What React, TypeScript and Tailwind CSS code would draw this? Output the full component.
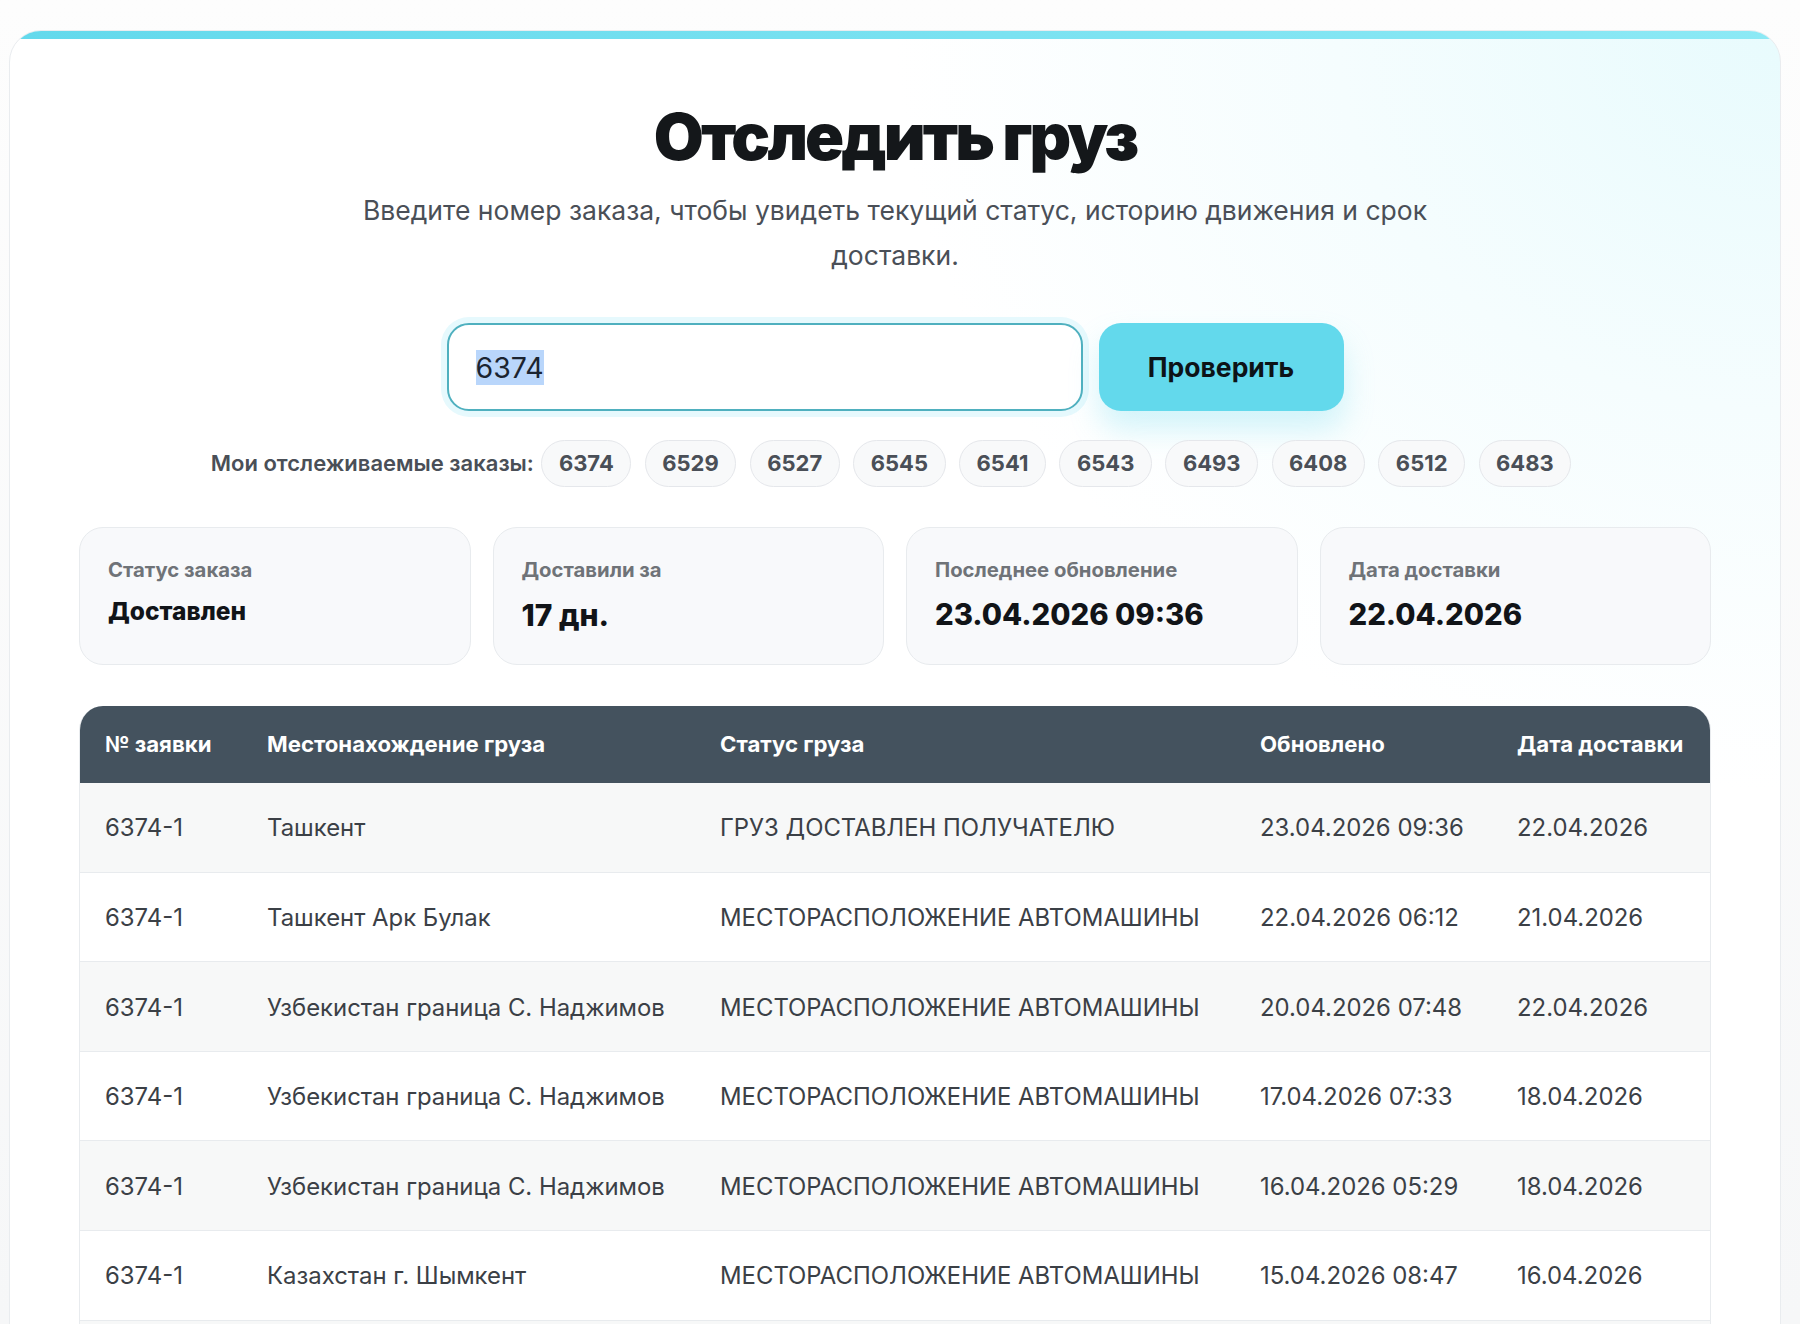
import { useEffect, useRef } from "react";

const chips = ["6374", "6529", "6527", "6545", "6541", "6543", "6493", "6408", "6512", "6483"];

const stats = [
  { label: "Статус заказа", value: "Доставлен", size: "text-[24.5px] leading-[36px]" },
  { label: "Доставили за", value: "17 дн.", size: "text-[30px] leading-[44px]" },
  { label: "Последнее обновление", value: "23.04.2026 09:36", size: "text-[29.3px] leading-[44px]" },
  { label: "Дата доставки", value: "22.04.2026", size: "text-[29.3px] leading-[44px]" },
];

const rows = [
  ["6374-1", "Ташкент", "ГРУЗ ДОСТАВЛЕН ПОЛУЧАТЕЛЮ", "23.04.2026 09:36", "22.04.2026"],
  ["6374-1", "Ташкент Арк Булак", "МЕСТОРАСПОЛОЖЕНИЕ АВТОМАШИНЫ", "22.04.2026 06:12", "21.04.2026"],
  ["6374-1", "Узбекистан граница С. Наджимов", "МЕСТОРАСПОЛОЖЕНИЕ АВТОМАШИНЫ", "20.04.2026 07:48", "22.04.2026"],
  ["6374-1", "Узбекистан граница С. Наджимов", "МЕСТОРАСПОЛОЖЕНИЕ АВТОМАШИНЫ", "17.04.2026 07:33", "18.04.2026"],
  ["6374-1", "Узбекистан граница С. Наджимов", "МЕСТОРАСПОЛОЖЕНИЕ АВТОМАШИНЫ", "16.04.2026 05:29", "18.04.2026"],
  ["6374-1", "Казахстан г. Шымкент", "МЕСТОРАСПОЛОЖЕНИЕ АВТОМАШИНЫ", "15.04.2026 08:47", "16.04.2026"],
];

const heads = ["№ заявки", "Местонахождение груза", "Статус груза", "Обновлено", "Дата доставки"];

export default function App() {
  const inputRef = useRef<HTMLInputElement>(null);
  useEffect(() => {
    inputRef.current?.focus();
    inputRef.current?.select();
  }, []);

  return (
    <div className="h-[1324px] overflow-hidden bg-gradient-to-b from-[#fdfdfd] to-[#f6f7f8] pt-[30px] pl-[9px] font-['Inter','Noto_Sans',sans-serif]">
      <div className="w-[1772px] overflow-hidden rounded-[32px] border border-[#e9ecef] bg-[radial-gradient(ellipse_50%_55%_at_100%_0%,#e8fbfd_0%,#f5fdfe_50%,#ffffff_100%)]">
        <div className="h-[8px] bg-gradient-to-r from-[#63d9ec] to-[#8ce9f5]" />
        <div className="px-[69px]">
          <h1 className="mt-[58px] text-center text-[64.6px] leading-[80px] font-black tracking-[-0.045em] text-[#14171a]">
            Отследить груз
          </h1>
          <p className="mx-auto mt-[11px] w-[1100px] text-center text-[26.5px] leading-[45px] text-[#4a4f57]">
            Введите номер заказа, чтобы увидеть текущий статус, историю движения и срок доставки.
          </p>

          <div className="mt-[45px] flex justify-center gap-[16px]">
            <input
              ref={inputRef}
              defaultValue="6374"
              className="h-[88px] w-[636px] rounded-[22px] border-2 border-[#4fb0bf] bg-white pl-[27px] text-[28.5px] text-[#1b2430] shadow-[0_0_0_6px_#e6f9fd] outline-none selection:bg-[#b9d6fb]"
            />
            <button className="h-[88px] w-[245px] rounded-[22px] bg-[#63d9ec] pt-[2px] text-[26.5px] font-bold text-[#0d1317] shadow-[0_18px_30px_rgba(99,217,236,0.28)]">
              Проверить
            </button>
          </div>

          <div className="mt-[29px] flex items-center justify-center gap-[13.5px] pr-[8px]">
            <span className="mr-[-6px] text-[22px] font-semibold text-[#4a4f57]">Мои отслеживаемые заказы:</span>
            {chips.map((c) => (
              <span
                key={c}
                className="flex h-[47px] items-center rounded-full border border-[#e5e7eb] bg-[#f8f9fa] px-[16.5px] text-[22px] font-bold text-[#4a4f57]"
              >
                {c}
              </span>
            ))}
          </div>

          <div className="mt-[40px] grid grid-cols-4 gap-[22px]">
            {stats.map((s) => (
              <div key={s.label} className="h-[138px] rounded-[24px] border border-[#e8ebee] bg-[#f8f9fb] px-[28px] pt-[28px]">
                <div className="text-[20.3px] leading-[28px] font-bold text-[#6f7378]">{s.label}</div>
                <div className={`mt-[9px] font-extrabold text-[#111418] ${s.size}`}>{s.value}</div>
              </div>
            ))}
          </div>

          <div className="mt-[41px] overflow-hidden rounded-t-[24px] border-x border-[#e8ebee]">
            <table className="w-full table-fixed border-collapse">
              <colgroup>
                <col className="w-[162px]" />
                <col className="w-[453px]" />
                <col className="w-[540px]" />
                <col className="w-[257px]" />
                <col />
              </colgroup>
              <thead>
                <tr className="h-[76.5px] bg-[#44525e]">
                  {heads.map((h) => (
                    <th key={h} className="whitespace-nowrap pb-[2px] pl-[25px] text-left text-[22.2px] font-bold text-white">
                      {h}
                    </th>
                  ))}
                </tr>
              </thead>
              <tbody>
                {rows.map((r, i) => (
                  <tr key={i} className={i % 2 === 0 ? "h-[89.6px] border-b border-[#e8ebee] bg-[#f7f8f8]" : "h-[89.6px] border-b border-[#e8ebee] bg-white"}>
                    {r.map((c, j) => (
                      <td key={j} className="whitespace-nowrap pt-[2px] pl-[25px] text-[23.9px] text-[#3b4046]">
                        {c}
                      </td>
                    ))}
                  </tr>
                ))}
                <tr className="h-[89.6px] bg-[#f7f8f8]">
                  <td colSpan={5} />
                </tr>
              </tbody>
            </table>
          </div>
        </div>
      </div>
    </div>
  );
}
